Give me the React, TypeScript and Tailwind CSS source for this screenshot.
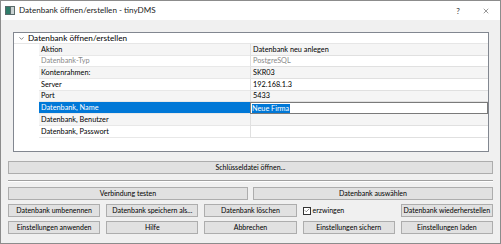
import { ChevronDown, X, Check } from "lucide-react"

const rows = [
  { label: "Aktion", value: "Datenbank neu anlegen" },
  { label: "Datenbank-Typ", value: "PostgreSQL", muted: true },
  { label: "Kontenrahmen:", value: "SKR03" },
  { label: "Server", value: "192.168.1.3" },
  { label: "Port", value: "5433" },
  { label: "Datenbank, Name", value: "Neue Firma", selected: true },
  { label: "Datenbank, Benutzer", value: "" },
  { label: "Datenbank, Passwort", value: "" },
]

function Btn({ children, className = "" }: { children?: React.ReactNode; className?: string }) {
  return (
    <button
      type="button"
      className={`h-[13px] border border-[#adadad] bg-[#e1e1e1] text-[7px] leading-none text-black whitespace-nowrap flex items-center justify-center ${className}`}
    >
      {children}
    </button>
  )
}

export default function App() {
  return (
    <div
      className="w-[501px] h-[244px] border border-[#8c8c8c] bg-[#f0f0f0] flex flex-col overflow-hidden"
      style={{ fontFamily: 'Lato, "Noto Sans", sans-serif' }}
    >
      {/* Title bar */}
      <div className="h-[19px] bg-white flex items-center shrink-0">
        <svg width="10" height="9" viewBox="0 0 10 9" className="ml-[4px] mr-[4px]">
          <rect x="0" y="0" width="10" height="9" fill="#5a6b6b" />
          <rect x="1" y="1" width="4" height="7" fill="#2f7d6a" />
          <rect x="6" y="1" width="3" height="7" fill="#c9d2d2" />
        </svg>
        <span className="text-[8.1px] text-[#222] whitespace-nowrap">Datenbank öffnen/erstellen - tinyDMS</span>
        <div className="ml-auto flex items-center">
          <span className="text-[8px] text-[#333] w-[28px] text-center">?</span>
          <X className="w-[8px] h-[8px] text-[#333] mx-[10px]" strokeWidth={1.5} />
        </div>
      </div>

      {/* Body */}
      <div className="flex-1 px-[7px] pt-[12px] flex flex-col">
        {/* Tree */}
        <div className="ml-[5px] mr-[4px] h-[120px] border border-[#828790] bg-white flex flex-col text-[7.3px] leading-none whitespace-nowrap">
          <div className="h-[11px] flex items-center border-b border-[#e6e6e6] text-[8.2px]">
            <ChevronDown className="w-[7px] h-[7px] ml-[4px] mr-[3px] text-[#333]" strokeWidth={2} />
            <span>Datenbank öffnen/erstellen</span>
          </div>
          {rows.map((r, i) => (
            <div key={r.label} className="h-[11.7px] flex">
              <div className="w-[25px] bg-white" />
              <div
                className={`w-[211px] flex items-center pl-[2px] border-b border-[#e8e8e8] ${
                  r.selected ? "bg-[#0078d7] text-white border-[#0078d7]" : i % 2 === 0 ? "bg-[#f5f5f5]" : "bg-white"
                } ${r.muted ? "text-[#8a8a8a]" : ""}`}
              >
                {r.label}
              </div>
              {r.selected ? (
                <div className="flex-1 border border-[#7a7a7a] bg-white flex items-center pl-[1px]">
                  <span className="bg-[#0078d7] text-white h-[9px] flex items-center pr-[1px]">{r.value}</span>
                </div>
              ) : (
                <div
                  className={`flex-1 flex items-center pl-[2px] border-l border-b border-[#e0e0e0] ${
                    i % 2 === 0 ? "bg-[#f5f5f5]" : "bg-white"
                  } ${r.muted ? "text-[#8a8a8a]" : ""}`}
                >
                  {r.value}
                </div>
              )}
            </div>
          ))}
        </div>

        {/* Key file button */}
        <Btn className="mt-[9px] w-full border-[#0078d7]">Schlüsseldatei öffnen...</Btn>

        <div className="mt-[6px] h-px bg-[#a0a0a0] border-b border-white box-content" />

        {/* Button grid */}
        <div className="mt-[5px] grid grid-cols-2 gap-x-[5px]">
          <Btn>Verbindung testen</Btn>
          <Btn>Datenbank auswählen</Btn>
        </div>
        <div className="mt-[4px] grid grid-cols-5 gap-x-[6px]">
          <Btn>Datenbank umbenennen</Btn>
          <Btn>Datenbank speichern als...</Btn>
          <Btn>Datenbank löschen</Btn>
          <div className="h-[13px] flex items-center text-[7px] whitespace-nowrap">
            <span className="w-[8px] h-[8px] border border-[#333] bg-white flex items-center justify-center mr-[2px]">
              <Check className="w-[7px] h-[7px] text-[#222]" strokeWidth={2} />
            </span>
            erzwingen
          </div>
          <Btn>Datenbank wiederherstellen</Btn>
        </div>
        <div className="mt-[4px] grid grid-cols-5 gap-x-[6px]">
          <Btn>Einstellungen anwenden</Btn>
          <Btn>Hilfe</Btn>
          <Btn>Abbrechen</Btn>
          <Btn>Einstellungen sichern</Btn>
          <Btn>Einstellungen laden</Btn>
        </div>
      </div>
    </div>
  )
}
